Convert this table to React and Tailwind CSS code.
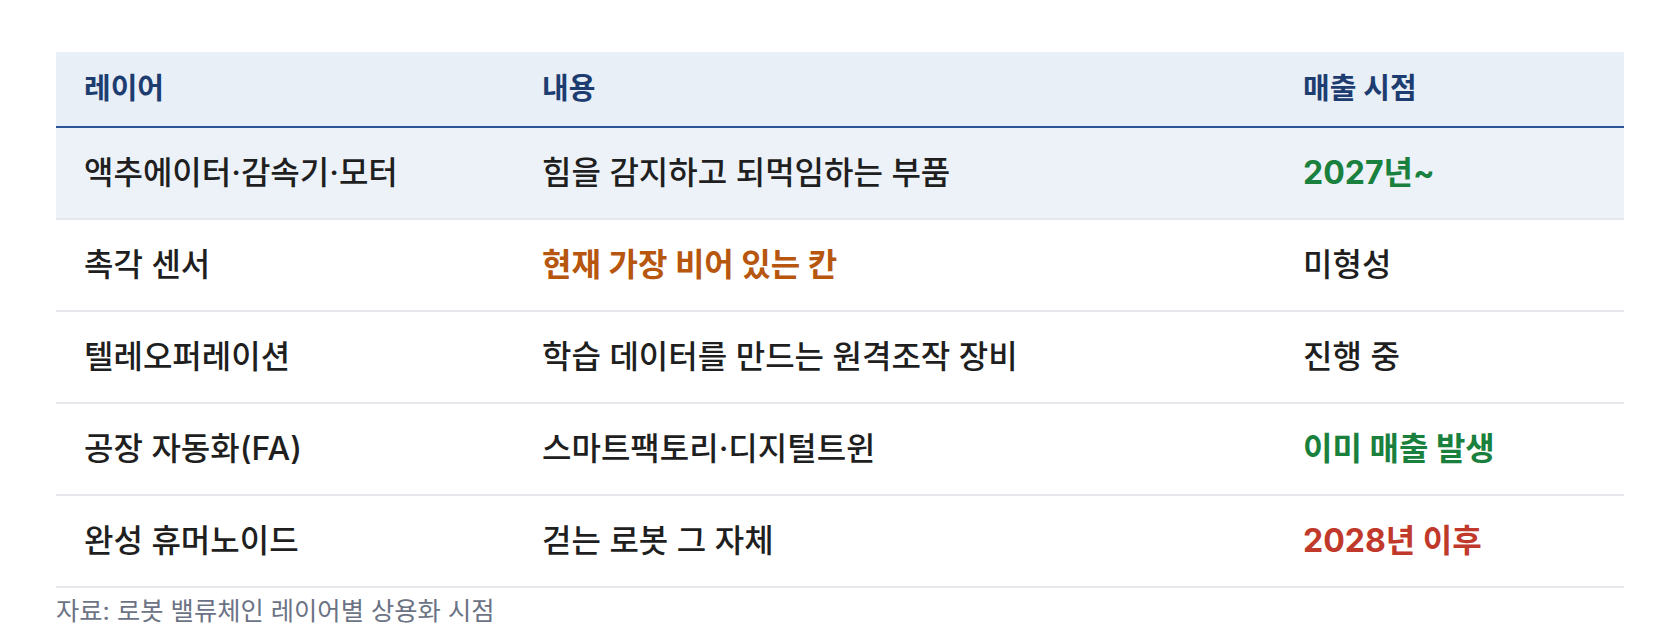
const rows = [
  { layer: '액추에이터·감속기·모터', desc: '힘을 감지하고 되먹임하는 부품', when: '2027년~', tone: 'green', highlight: true },
  { layer: '촉각 센서', desc: '현재 가장 비어 있는 칸', descTone: 'orange', when: '미형성' },
  { layer: '텔레오퍼레이션', desc: '학습 데이터를 만드는 원격조작 장비', when: '진행 중' },
  { layer: '공장 자동화(FA)', desc: '스마트팩토리·디지털트윈', when: '이미 매출 발생', tone: 'green' },
  { layer: '완성 휴머노이드', desc: '걷는 로봇 그 자체', when: '2028년 이후', tone: 'red' },
];

const toneClass = {
  green: 'font-bold text-[#19803d]',
  orange: 'font-bold text-[#b7560f]',
  red: 'font-bold text-[#c0392b]',
};

export default function App() {
  return (
    <div
      className="min-h-[640px] bg-white px-14 pt-[52px]"
      style={{ fontFamily: 'Inter, "Noto Sans CJK KR", sans-serif' }}
    >
      <div className="w-[1568px]">
        {/* header */}
        <div className="grid grid-cols-[458px_761px_1fr] h-[76px] items-center bg-[#e8eff7] border-b-2 border-[#2c5597] text-[29px] font-bold text-[#1d3d70]">
          <div className="px-7">레이어</div>
          <div className="px-7">내용</div>
          <div className="px-7">매출 시점</div>
        </div>

        {rows.map((r) => (
          <div
            key={r.layer}
            className={`grid grid-cols-[458px_761px_1fr] h-[92px] items-center border-b-2 border-[#e5e7eb] text-[32px] font-medium text-[#1f1f1f] ${r.highlight ? 'bg-[#edf2f9]' : ''}`}
          >
            <div className="px-7">{r.layer}</div>
            <div className={`px-7 ${r.descTone ? toneClass[r.descTone] : ''}`}>{r.desc}</div>
            <div className={`px-7 ${r.tone ? toneClass[r.tone] : ''}`}>{r.when}</div>
          </div>
        ))}

        <p className="mt-1 text-[25.3px] text-[#6b7385]">자료: 로봇 밸류체인 레이어별 상용화 시점</p>
      </div>
    </div>
  );
}
